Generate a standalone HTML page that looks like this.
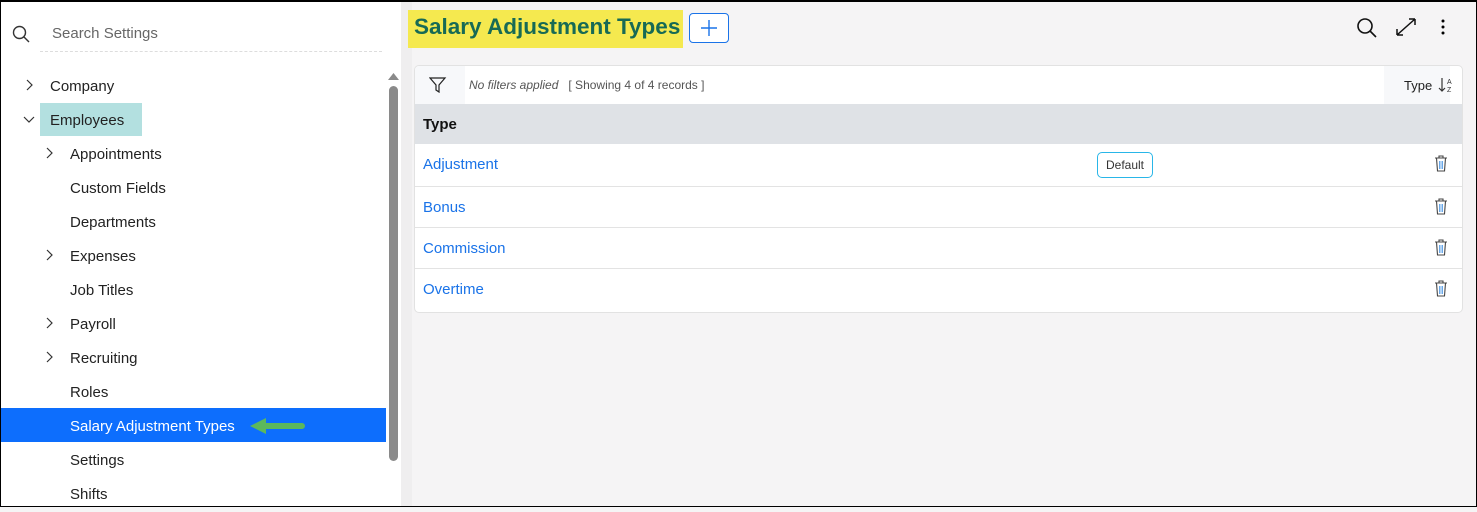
<!DOCTYPE html>
<html><head><style>
*{box-sizing:border-box;margin:0;padding:0}
body{width:1477px;height:507px;overflow:hidden;font-family:"Liberation Sans",sans-serif;background:#f5f4f5;position:relative}
.frame{position:absolute;inset:0;border:1px solid #000;border-top-width:2px;z-index:10;pointer-events:none}
.side{position:absolute;left:0;top:0;width:401px;height:507px;background:#fff}
.strip{position:absolute;left:401px;top:0;width:11px;height:507px;background:#efeeef}
.it{position:absolute;font-size:15px;color:#222;height:34px;line-height:34px;white-space:nowrap}
.sb{position:absolute;left:389px;top:86px;width:9px;height:375px;background:#8a8a8a;border-radius:5px}
.card{position:absolute;left:414px;top:65px;width:1049px;height:248px;background:#fff;border:1px solid #e2e2e2;border-radius:5px;overflow:hidden}
.row{position:absolute;left:0;width:100%;border-bottom:1px solid #e3e3e3;font-size:15px;color:#1a73e8;padding-left:8px}
.trash{position:absolute;right:14px}
</style></head><body>
<div class="frame"></div>
<div class="side">
<svg style="position:absolute;left:12px;top:25px" width="18" height="18" viewBox="0 0 18 18"><circle cx="7.5" cy="7.5" r="6" fill="none" stroke="#333" stroke-width="1.4"/><line x1="12" y1="12" x2="17" y2="17" stroke="#333" stroke-width="1.4"/></svg>
<div style="position:absolute;left:52px;top:25px;font-size:15px;color:#666">Search Settings</div>
<div style="position:absolute;left:40px;top:51px;width:342px;border-top:1px dashed #ddd"></div>
<svg style="position:absolute;left:26px;top:79px" width="8" height="12"><path d="M1 1l5 5-5 5" fill="none" stroke="#333" stroke-width="1.2"/></svg>
<div class="it" style="left:50px;top:70px">Company</div>
<div style="position:absolute;left:40px;top:103px;width:102px;height:33px;background:#b3e0e0"></div>
<svg style="position:absolute;left:23px;top:116px" width="12" height="8"><path d="M1 1l5 5 5-5" fill="none" stroke="#333" stroke-width="1.2"/></svg>
<div class="it" style="left:50px;top:104px">Employees</div>
<svg style="position:absolute;left:46px;top:147px" width="8" height="12"><path d="M1 1l5 5-5 5" fill="none" stroke="#333" stroke-width="1.2"/></svg>
<div class="it" style="left:70px;top:138px">Appointments</div>
<div class="it" style="left:70px;top:172px">Custom Fields</div>
<div class="it" style="left:70px;top:206px">Departments</div>
<svg style="position:absolute;left:46px;top:249px" width="8" height="12"><path d="M1 1l5 5-5 5" fill="none" stroke="#333" stroke-width="1.2"/></svg>
<div class="it" style="left:70px;top:240px">Expenses</div>
<div class="it" style="left:70px;top:274px">Job Titles</div>
<svg style="position:absolute;left:46px;top:317px" width="8" height="12"><path d="M1 1l5 5-5 5" fill="none" stroke="#333" stroke-width="1.2"/></svg>
<div class="it" style="left:70px;top:308px">Payroll</div>
<svg style="position:absolute;left:46px;top:351px" width="8" height="12"><path d="M1 1l5 5-5 5" fill="none" stroke="#333" stroke-width="1.2"/></svg>
<div class="it" style="left:70px;top:342px">Recruiting</div>
<div class="it" style="left:70px;top:376px">Roles</div>
<div style="position:absolute;left:1px;top:408px;width:385px;height:34px;background:#0d6efd"></div>
<div class="it" style="left:70px;top:410px;color:#fff">Salary Adjustment Types</div>
<svg style="position:absolute;left:248px;top:416px" width="60" height="20"><path d="M2 10L18 2V7H54a3 3 0 0 1 0 6H18V18Z" fill="#5cb85c"/></svg>
<div class="it" style="left:70px;top:444px">Settings</div>
<div class="it" style="left:70px;top:478px">Shifts</div>
<svg style="position:absolute;left:388px;top:72px" width="11" height="8"><path d="M0 8L5.5 1 11 8Z" fill="#8a8a8a"/></svg>
<div class="sb"></div>
</div>
<div class="strip"></div>
<div style="position:absolute;left:408px;top:10px;width:275px;height:38px;background:#f5e94f"></div>
<div style="position:absolute;left:414px;top:14px;font-size:22.5px;font-weight:bold;color:#176a55;white-space:nowrap">Salary Adjustment Types</div>
<div style="position:absolute;left:689px;top:13px;width:40px;height:30px;border:1px solid #1a73e8;border-radius:4px;background:#fff"></div>
<svg style="position:absolute;left:700px;top:19px" width="18" height="18"><path d="M9 1v16M1 9h16" stroke="#1a73e8" stroke-width="1.4"/></svg>
<svg style="position:absolute;left:1356px;top:17px" width="22" height="22"><circle cx="9" cy="9" r="7" fill="none" stroke="#111" stroke-width="1.6"/><line x1="14" y1="14" x2="20" y2="20" stroke="#111" stroke-width="1.6"/></svg>
<svg style="position:absolute;left:1395px;top:17px" width="22" height="20"><path d="M2 18L20 2M2 18v-6M2 18h6M20 2h-6M20 2v6" fill="none" stroke="#111" stroke-width="1.5"/></svg>
<svg style="position:absolute;left:1440px;top:18px" width="6" height="18"><circle cx="3" cy="3" r="1.5"/><circle cx="3" cy="9" r="1.5"/><circle cx="3" cy="15" r="1.5"/></svg>
<div class="card">
<div style="position:absolute;left:0;top:0;width:50px;height:38px;background:#f7f8fa"></div>
<svg style="position:absolute;left:14px;top:11px" width="18" height="16"><path d="M1 1h15l-6 7v7l-3-2V8Z" fill="none" stroke="#222" stroke-width="1.2"/></svg>
<div style="position:absolute;left:54px;top:12px;font-size:12px;color:#555"><i>No filters applied</i>&nbsp;&nbsp; [ Showing 4 of 4 records ]</div>
<div style="position:absolute;right:12px;top:0;width:66px;height:38px;background:#f7f8fa"></div>
<div style="position:absolute;left:989px;top:12px;font-size:13px;color:#222">Type</div>
<svg style="position:absolute;left:1023px;top:11px" width="16" height="16"><path d="M4 1v13M1 11l3 3 3-3" fill="none" stroke="#333" stroke-width="1.2"/><text x="9" y="7" font-size="7" fill="#333" font-family="Liberation Sans">A</text><text x="9" y="15" font-size="7" fill="#333" font-family="Liberation Sans">Z</text></svg>
<div style="position:absolute;left:0;top:38px;width:100%;height:40px;background:#dfe2e6;font-size:15px;font-weight:bold;padding:12px 8px;color:#111">Type</div>
<div class="row" style="top:78px;height:43px;line-height:42px">Adjustment
<div style="position:absolute;left:682px;top:8px;width:56px;height:26px;border:1px solid #29b6e8;border-radius:5px;color:#333;font-size:12px;line-height:24px;text-align:center">Default</div>
<svg class="trash" style="top:11px" width="14" height="17" viewBox="0 0 14 17"><path d="M1 3h12M5 3V1h4v2M2.5 3l1 13h7l1-13" fill="none" stroke="#444" stroke-width="1.1"/><path d="M5.5 6v8M7 6v8M8.5 6v8" stroke="#6aa8e8" stroke-width="1"/></svg></div>
<div class="row" style="top:121px;height:41px;line-height:42px">Bonus<svg class="trash" style="top:11px" width="14" height="17" viewBox="0 0 14 17"><path d="M1 3h12M5 3V1h4v2M2.5 3l1 13h7l1-13" fill="none" stroke="#444" stroke-width="1.1"/><path d="M5.5 6v8M7 6v8M8.5 6v8" stroke="#6aa8e8" stroke-width="1"/></svg></div>
<div class="row" style="top:162px;height:41px;line-height:42px">Commission<svg class="trash" style="top:11px" width="14" height="17" viewBox="0 0 14 17"><path d="M1 3h12M5 3V1h4v2M2.5 3l1 13h7l1-13" fill="none" stroke="#444" stroke-width="1.1"/><path d="M5.5 6v8M7 6v8M8.5 6v8" stroke="#6aa8e8" stroke-width="1"/></svg></div>
<div class="row" style="top:203px;height:44px;line-height:42px;border:none">Overtime<svg class="trash" style="top:11px" width="14" height="17" viewBox="0 0 14 17"><path d="M1 3h12M5 3V1h4v2M2.5 3l1 13h7l1-13" fill="none" stroke="#444" stroke-width="1.1"/><path d="M5.5 6v8M7 6v8M8.5 6v8" stroke="#6aa8e8" stroke-width="1"/></svg></div>
</div>
</body></html>
